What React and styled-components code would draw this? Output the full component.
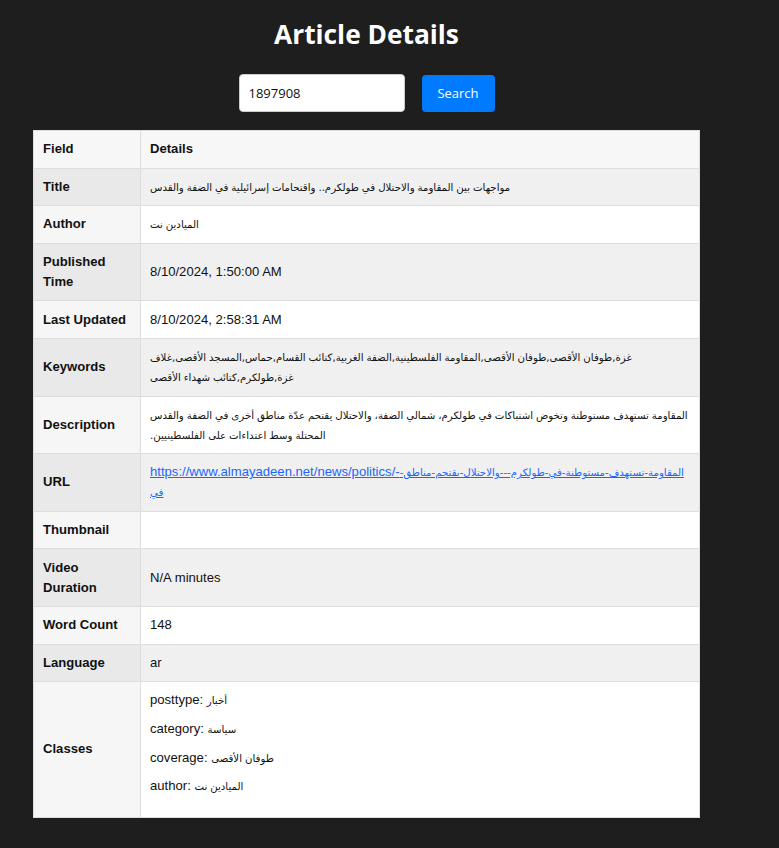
import styled, { createGlobalStyle } from 'styled-components';

const GlobalStyle = createGlobalStyle`
  html, body {
    margin: 0;
    padding: 0;
    background: #1e1e1e;
  }
`;

const Page = styled.div`
  width: 733px;
  min-height: 848px;
  display: flex;
  flex-direction: column;
  align-items: center;
  font-family: "Liberation Sans", Arial, "DejaVu Sans", sans-serif;
`;

const Heading = styled.h1`
  margin: 15px 0 21px;
  font-family: "Open Sans", "Noto Sans", sans-serif;
  font-size: 26.3px;
  font-weight: 700;
  line-height: 38px;
  color: #ffffff;
`;

const SearchBar = styled.div`
  display: flex;
  align-items: center;
  gap: 17px;
  margin-bottom: 18px;
`;

const SearchInput = styled.input`
  box-sizing: border-box;
  width: 166px;
  height: 38px;
  padding: 0 9px;
  border: 1px solid #cccccc;
  border-radius: 4px;
  background: #ffffff;
  font-family: "Open Sans", "Noto Sans", sans-serif;
  font-size: 13px;
  color: #111111;
  outline: none;
`;

const SearchButton = styled.button`
  box-sizing: border-box;
  width: 73px;
  height: 37px;
  border: none;
  border-radius: 4px;
  background: #007bff;
  color: #ffffff;
  font-family: "Open Sans", "Noto Sans", sans-serif;
  font-size: 13px;
  cursor: pointer;
`;

const Table = styled.table`
  width: 667px;
  border-collapse: collapse;
  font-size: 13.1px;
  line-height: 20px;
  color: #111111;
  table-layout: fixed;
`;

const HeadCell = styled.th`
  text-align: left;
  padding: 8.3px 9px;
  border: 1px solid #dddddd;
  background: #f7f7f7;
  font-weight: 700;
  width: ${p => p.$w || 'auto'};
`;

const Row = styled.tr`
  background: ${p => (p.$alt ? '#f0f0f0' : '#ffffff')};
`;

const FieldCell = styled.th`
  text-align: left;
  vertical-align: middle;
  padding: 8.3px 9px;
  border: 1px solid #dddddd;
  font-weight: 700;
  background: ${p => (p.$alt ? '#e9e9e9' : '#f6f6f6')};
`;

const ValueCell = styled.td`
  padding: 8.3px 5px 8.3px 9px;
  border: 1px solid #dddddd;
  vertical-align: middle;
  word-break: break-word;
`;

const Arabic = styled.span`
  font-family: "DejaVu Sans", sans-serif;
  font-size: 10.2px;
  line-height: 1;
  word-spacing: -0.3px;
`;

const Link = styled.a`
  color: #1a66ff;
  text-decoration: underline;
`;

const ClassLine = styled.p`
  margin: 0 0 8.7px;
  &:last-child {
    margin-bottom: 12px;
  }
`;

const rows = [
  { field: 'Title', value: <Arabic dir="rtl">مواجهات بين المقاومة والاحتلال في طولكرم.. واقتحامات إسرائيلية في الضفة والقدس</Arabic> },
  { field: 'Author', value: <Arabic dir="rtl">الميادين نت</Arabic> },
  { field: 'Published Time', value: '8/10/2024, 1:50:00 AM' },
  { field: 'Last Updated', value: '8/10/2024, 2:58:31 AM' },
  { field: 'Keywords', value: <Arabic dir="rtl">غزة,طوفان الأقصى,طوفان الأقصى,المقاومة الفلسطينية,الضفة الغربية,كتائب القسام,حماس,المسجد الأقصى,غلاف غزة,طولكرم,كتائب شهداء الأقصى</Arabic> },
  { field: 'Description', value: <Arabic dir="rtl">المقاومة تستهدف مستوطنة وتخوض اشتباكات في طولكرم، شمالي الضفة، والاحتلال يقتحم عدّة مناطق أخرى في الضفة والقدس المحتلة وسط اعتداءات على الفلسطينيين.</Arabic> },
  {
    field: 'URL',
    value: (
      <Link href="#">
        https://www.almayadeen.net/news/politics/-<Arabic>المقاومة-تستهدف-مستوطنة-في-طولكرم---والاحتلال-يقتحم-مناطق-في</Arabic>
      </Link>
    ),
  },
  { field: 'Thumbnail', value: '' },
  { field: 'Video Duration', value: 'N/A minutes' },
  { field: 'Word Count', value: '148' },
  { field: 'Language', value: 'ar' },
];

const classes = [
  ['posttype', 'أخبار'],
  ['category', 'سياسة'],
  ['coverage', 'طوفان الأقصى'],
  ['author', 'الميادين نت'],
];

export default function App() {
  return (
    <>
      <GlobalStyle />
      <Page>
        <Heading>Article Details</Heading>
        <SearchBar>
          <SearchInput defaultValue="1897908" />
          <SearchButton>Search</SearchButton>
        </SearchBar>
        <Table>
          <thead>
            <tr>
              <HeadCell $w="88px">Field</HeadCell>
              <HeadCell>Details</HeadCell>
            </tr>
          </thead>
          <tbody>
            {rows.map((r, i) => (
              <Row key={r.field} $alt={i % 2 === 0}>
                <FieldCell $alt={i % 2 === 0}>{r.field}</FieldCell>
                <ValueCell>{r.value}</ValueCell>
              </Row>
            ))}
            <Row $alt={rows.length % 2 === 0}>
              <FieldCell $alt={rows.length % 2 === 0}>Classes</FieldCell>
              <ValueCell>
                {classes.map(([k, v]) => (
                  <ClassLine key={k}>
                    {k}: <Arabic>{v}</Arabic>
                  </ClassLine>
                ))}
              </ValueCell>
            </Row>
          </tbody>
        </Table>
      </Page>
    </>
  );
}
